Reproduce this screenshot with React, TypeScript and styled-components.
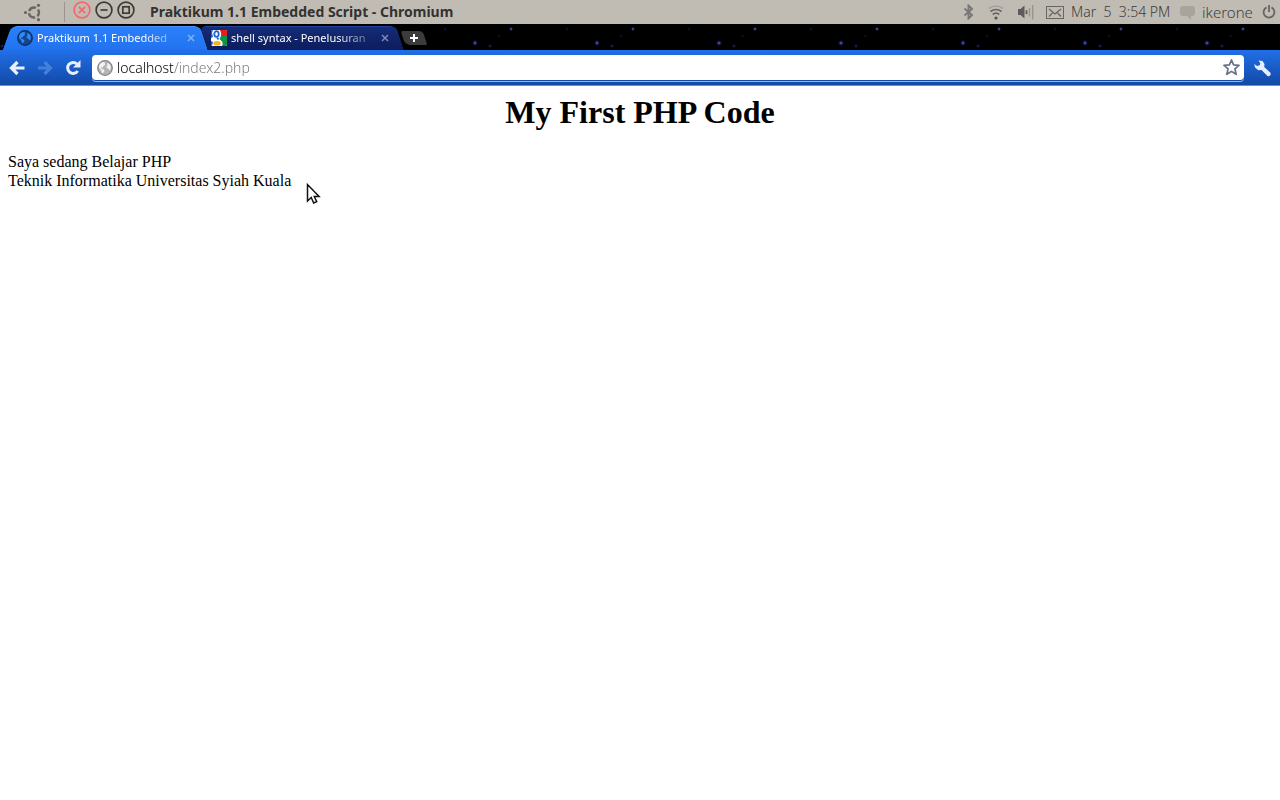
import React from 'react';
import styled, { createGlobalStyle } from 'styled-components';

const GlobalStyle = createGlobalStyle`
  body { margin: 0; background: #fff; color: #000; font: 16px/19px "Liberation Serif", "Times New Roman", serif; }
  button { border: 0; padding: 0; background: none; font: inherit; color: inherit; display: flex; }
  svg { display: block; flex: none; }
`;

const uiFont = '"Noto Sans", "Open Sans", sans-serif';

const Panel = styled.header`
  height: 24px;
  display: flex;
  align-items: center;
  background: #c1bcb3;
  color: #3c3c3c;
  font-family: ${uiFont};
  white-space: nowrap;
`;
const Launcher = styled.button`
  padding: 0 22px 0 23px !important;
`;
const Separator = styled.span`
  width: 1px;
  height: 20px;
  margin-right: 8px;
  background: #9a968f;
`;
const WindowControls = styled.div`
  display: flex;
  gap: 4px;
  padding-bottom: 4px;
`;
const WindowTitle = styled.div`
  flex: 1;
  margin-left: 15px;
  font: 700 14px/24px ${uiFont};
  color: #323232;
`;
const Indicators = styled.div`
  display: flex;
  align-items: center;
  gap: 14px;
  padding-right: 12px;
`;
const IndicatorGroup = styled.div`
  display: flex;
  align-items: center;
  gap: 7px;
  padding-right: 4px;
`;
const PanelText = styled.button<{ $width: number; $size: number }>`
  width: ${(p) => p.$width}px;
  font: 300 ${(p) => p.$size}px/24px ${uiFont} !important;
  white-space: pre;
`;

const TabStrip = styled.nav`
  height: 26px;
  display: flex;
  align-items: flex-end;
  background-color: #000;
  background-image:
    radial-gradient(circle at 12px 19px, #8c98f0 0, #20287c 1px, transparent 3px),
    radial-gradient(circle at 27px 22px, #28286c 0, #14143c 1px, transparent 2px),
    radial-gradient(circle at 48px 5px, #8088cc 0, #20285c 1px, transparent 2px),
    radial-gradient(circle at 104px 5px, #14142c 0, transparent 2px),
    radial-gradient(circle at 36px 12px, #10102a 0, transparent 2px);
  background-size: 122px 26px;
  background-position: 97px 0;
`;
const Tab = styled.div<{ $active?: boolean }>`
  position: relative;
  isolation: isolate;
  box-sizing: border-box;
  width: ${(p) => (p.$active ? 206 : 196)}px;
  height: 24px;
  padding-left: ${(p) => (p.$active ? 17 : 5)}px;
  display: flex;
  align-items: center;
  color: #fff;
  font: 11px/24px ${uiFont};
  z-index: ${(p) => (p.$active ? 2 : 1)};
  &::before, &::after {
    content: "";
    position: absolute;
    z-index: -1;
    top: 0;
    bottom: 0;
    width: 60%;
    box-sizing: border-box;
    background: ${(p) => (p.$active ? 'linear-gradient(#2a80fb, #2272ee)' : 'linear-gradient(#152c78, #0d1c5c)')};
    border-top: 1px solid ${(p) => (p.$active ? '#4c94fa' : '#24419a')};
  }
  &::before {
    left: ${(p) => (p.$active ? 7 : -2)}px;
    border-radius: 6px 0 0 0;
    transform: skewX(${(p) => (p.$active ? -20 : 18)}deg);
  }
  &::after {
    right: 2px;
    border-radius: 0 6px 0 0;
    transform: skewX(18deg);
  }
`;
const TabLabel = styled.button`
  width: 142px;
  margin: 0 8px 0 4px !important;
  white-space: nowrap;
  mask-image: linear-gradient(to right, #000 104px, transparent 150px);
`;
const NewTab = styled.button`
  width: 22px;
  height: 14px;
  margin: 0 0 5px 1px !important;
  align-items: center;
  justify-content: center;
  position: relative;
  isolation: isolate;
  &::before {
    content: "";
    position: absolute;
    inset: 0;
    z-index: -1;
    background: #3c3c3c;
    border-radius: 2px 4px 2px 5px;
    transform: skewX(18deg);
  }
`;

const Toolbar = styled.div`
  height: 36px;
  box-sizing: border-box;
  padding: 5px 9px 0;
  display: flex;
  align-items: flex-start;
  background: linear-gradient(#216fe8, #124aa6);
  border-bottom: 1px solid #5c93e2;
`;
const NavButtons = styled.div`
  display: flex;
  align-items: center;
  gap: 12px;
  height: 26px;
  margin-right: 10px;
`;
const AddressBar = styled.form`
  flex: 1;
  min-width: 0;
  height: 25px;
  display: flex;
  align-items: center;
  gap: 4px;
  padding: 0 4px 0 5px;
  background: #fff;
  border-radius: 4px;
  box-shadow: 0 1px 0 #174a9c, 0 2px 0 #94b6ea;
`;
const AddressInput = styled.input`
  flex: 1;
  min-width: 0;
  height: 25px;
  padding: 0;
  border: 0;
  outline: 0;
  font: 300 14px/25px ${uiFont};
  color: transparent;
  caret-color: #000;
  background: linear-gradient(to right, #000 57px, #777 57px);
  -webkit-background-clip: text;
  background-clip: text;
`;
const ToolButton = styled.button`
  height: 26px;
  margin-left: 10px !important;
  align-items: center;
`;

const Page = styled.main`
  padding: 8px;
  h1 { margin: 0 0 21px; font-size: 32px; line-height: 37px; text-align: center; }
  p { margin: 0; }
`;
const Pointer = styled.svg`
  position: absolute;
  left: 305px;
  top: 182px;
`;

const UbuntuLogo = () => (
  <svg width="19" height="20" viewBox="0 0 19 20" fill="none" stroke="#6a6762">
    <circle cx="11" cy="10.500" r="5" strokeWidth="2.400" strokeDasharray="8.200 2.272" strokeDashoffset="4.100" />
    <g fill="#666" stroke="none"><circle cx="2.500" cy="10.500" r="1.600" /><circle cx="15.500" cy="3.300" r="1.600" /><circle cx="15.500" cy="17.700" r="1.600" /></g>
  </svg>
);

const WindowIcon = ({ kind }: { kind: 'close' | 'min' | 'max' }) => (
  <svg width="18" height="18" viewBox="0 0 18 18" fill="none" stroke={kind === 'close' ? '#f2696b' : '#3c3b37'} strokeWidth="1.700">
    <circle cx="9" cy="9" r="7.900" />
    {kind === 'close' && <path d="M5.800 5.800l6.400 6.400M12.200 5.800l-6.400 6.400" />}
    {kind === 'min' && <path d="M5.500 9h7" />}
    {kind === 'max' && <rect x="5.800" y="5.800" width="6.400" height="6.400" />}
  </svg>
);

const Globe = ({ sea, land, line }: { sea: string; land: string; line: string }) => (
  <svg width="16" height="16" viewBox="0 0 16 16">
    <circle cx="8" cy="8" r="7.300" fill={sea} stroke={line} strokeWidth="1.200" />
    <path fill={land} d="M2 6L3.500 3.300 6 2l2.200.2-.7 1.300.8 1L6.500 6 5.600 7.500 4 7.200l.4 1.500 2.200.8 1 1.500-1.300 1.400-.3 1.300L4.700 12.500 4.200 10 2.200 8.200zM10.500 3l2 1 1.300 2.600-.3 2.600-1 1.300-1.200-2-1.500-.5-.3-1.500 1.200-1-.6-1.200z" />
  </svg>
);

const GoogleIcon = () => (
  <svg width="16" height="16" viewBox="0 0 16 16">
    <rect width="16" height="16" rx="1" fill="#fff" />
    <path fill="#ec1c1c" d="M9 0h6q1 0 1 1v5h-6Q10.500 2.500 9 0z" />
    <path fill="#119448" d="M10 6h6v9q0 1-1 1h-4q1.500-3-.5-5L8.500 9z" />
    <path fill="#1b62c9" d="M0 1q0-1 1-1h1L1 3l1 4-2 1zM0 11l2 1-1 4q-1 0-1-1z" />
    <ellipse cx="5.500" cy="4" rx="2.200" ry="2.900" fill="#fff" stroke="#1f66d0" strokeWidth="1.800" />
    <path fill="none" stroke="#1f66d0" strokeWidth="1.600" d="M6 7.500l1.500 2" />
    <ellipse cx="6" cy="13.200" rx="3.700" ry="2.300" fill="#f6b31c" />
  </svg>
);

const CloseIcon = ({ color }: { color: string }) => (
  <svg width="8" height="8" viewBox="0 0 8 8" stroke={color} strokeWidth="1.500"><path d="M1 1l6 6M7 1L1 7" /></svg>
);

const ArrowIcon = ({ color, flip }: { color: string; flip?: boolean }) => (
  <svg width="16" height="16" viewBox="0 0 16 16" fill="none" stroke={color} strokeWidth="3.200">
    <path d={flip ? 'M1 8h12M7.500 2l6 6-6 6' : 'M15.500 8h-12M8.500 2l-6 6 6 6'} />
  </svg>
);

const noop = () => undefined;

export default function App() {
  return (
    <>
      <GlobalStyle />
      <Panel>
        <Launcher aria-label="Main menu"><UbuntuLogo /></Launcher>
        <Separator />
        <WindowControls>
          <button aria-label="Close window"><WindowIcon kind="close" /></button>
          <button aria-label="Minimize"><WindowIcon kind="min" /></button>
          <button aria-label="Restore"><WindowIcon kind="max" /></button>
        </WindowControls>
        <WindowTitle>Praktikum 1.1 Embedded Script - Chromium</WindowTitle>
        <Indicators>
          <button aria-label="Bluetooth">
            <svg width="11" height="16" viewBox="0 0 11 16" fill="none" stroke="#777" strokeWidth="1.900"><path d="M1.500 4.500l7.500 6.500-3.500 3.500V1.500L9 5l-7.500 6.500" /></svg>
          </button>
          <button aria-label="Wireless network">
            <svg width="16" height="16" viewBox="0 0 16 16" fill="none" strokeWidth="1.700">
              <path stroke="#a5a19a" d="M1 4.500Q8-.500 15 4.500" />
              <path stroke="#666" d="M2.500 7.500q5.500-4 11 0M4.700 10.500q3.300-2.600 6.600 0" />
              <circle cx="8" cy="14" r="1.600" fill="#555" />
            </svg>
          </button>
          <button aria-label="Volume">
            <svg width="16" height="16" viewBox="0 0 16 16">
              <path fill="#5c5c5c" d="M0 5h2.500L6.500 1.500v13L2.500 11H0z" /><path stroke="#5c5c5c" strokeWidth="1.800" d="M8.500 6.200v4" /><path stroke="#999590" strokeWidth="1.500" d="M11.500 4v8.500M14.700 1v14.500" />
            </svg>
          </button>
        </Indicators>
        <IndicatorGroup>
          <button aria-label="Messages">
            <svg width="18" height="13" viewBox="0 0 18 13" fill="none" stroke="#666"><rect x=".5" y=".5" width="17" height="12" /><path strokeWidth="1.300" d="M3 3l6 5 6-5M3 10.500l3.500-3.500M15 10.500L11.500 7" /></svg>
          </button>
          <PanelText $width={102} $size={14}>{'Mar  5  3:54 PM'}</PanelText>
          <button aria-label="Chat status">
            <svg width="15" height="15" viewBox="0 0 15 15"><path fill="#a7a39d" d="M3 1h9q3 0 3 3v4q0 3-3 3h-1v4l-4-4H3q-3 0-3-3V4q0-3 3-3z" /></svg>
          </button>
          <PanelText $width={53} $size={15}>ikerone</PanelText>
          <button aria-label="Session">
            <svg width="14" height="14" viewBox="0 0 14 14" fill="none" stroke="#666" strokeWidth="1.800"><path d="M4.500 2.400a5.400 5.400 0 1 0 5 0M7 0v7" /></svg>
          </button>
        </IndicatorGroup>
      </Panel>

      <TabStrip>
        <Tab $active>
          <Globe sea="#14458f" land="#3189f5" line="#0c2d63" />
          <TabLabel>Praktikum 1.1 Embedded</TabLabel>
          <button aria-label="Close tab"><CloseIcon color="#7eb3fa" /></button>
        </Tab>
        <Tab>
          <GoogleIcon />
          <TabLabel>shell syntax - Penelusuran</TabLabel>
          <button aria-label="Close tab"><CloseIcon color="#7c89b8" /></button>
        </Tab>
        <NewTab aria-label="New tab">
          <svg width="8" height="8" viewBox="0 0 8 8" stroke="#fff" strokeWidth="2"><path d="M4 0v8M0 4h8" /></svg>
        </NewTab>
      </TabStrip>

      <Toolbar>
        <NavButtons>
          <button aria-label="Back"><ArrowIcon color="#eaf2ff" /></button>
          <button aria-label="Forward"><ArrowIcon color="#447fdc" flip /></button>
          <button aria-label="Reload">
            <svg width="17" height="16" viewBox="0 0 17 16"><path fill="none" stroke="#e8f0ff" strokeWidth="3" d="M12.700 11A5.500 5.500 0 1 1 12 4" /><path fill="#e8f0ff" d="M15.500 0v7.500H8z" /></svg>
          </button>
        </NavButtons>
        <AddressBar>
          <Globe sea="#b4b4b4" land="#f2f2f2" line="#858585" />
          <AddressInput aria-label="Address" value="localhost/index2.php" onChange={noop} />
          <button type="button" aria-label="Bookmark this page">
            <svg width="17" height="17" viewBox="0 0 17 17" fill="#fff" stroke="#65718a" strokeWidth="1.700" strokeLinejoin="round"><path d="M8.500 1l2.100 4.900 5.400.5-4.100 3.500 1.300 5.400-4.700-2.900-4.700 2.900 1.300-5.400L1 6.400l5.400-.5z" /></svg>
          </button>
        </AddressBar>
        <ToolButton aria-label="Customize and control">
          <svg width="17" height="17" viewBox="0 0 17 17" fill="#e6efff"><path d="M4.500.500L8.500 1l2 3-.3 3 6 5.500q1 1.500 0 2.800t-2.700.7L7.500 10l-3.200.2L1 7.500.2 4l2.800 2 2.800-.8.500-2z" /></svg>
        </ToolButton>
      </Toolbar>

      <Page>
        <h1>My First PHP Code</h1>
        <p>Saya sedang Belajar PHP<br />Teknik Informatika Universitas Syiah Kuala</p>
      </Page>
      <Pointer width="17" height="24" viewBox="0 0 17 24">
        <path d="M2.500 2.500v16.500l3.700-3.500 2.500 5.500 3-1.300-2.400-5.200h4.800z" fill="#fff" stroke="#111" strokeWidth="1.500" />
      </Pointer>
    </>
  );
}
